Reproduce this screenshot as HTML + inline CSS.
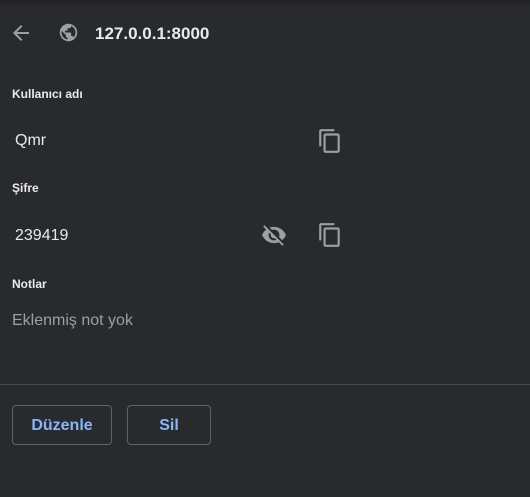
<!DOCTYPE html>
<html><head><meta charset="utf-8"><style>
body{margin:0;width:530px;height:497px;background:#292a2d;font-family:"Liberation Sans",sans-serif;position:relative;overflow:hidden;color:#e8eaed}
.top{position:absolute;left:0;top:0;width:530px;height:8px;background:linear-gradient(#1f2022,#292a2d)}
.a{position:absolute}
.lbl{font-size:12px;font-weight:bold;color:#e8eaed}
.val{font-size:16px;color:#e8eaed}
.btn{position:absolute;top:405px;height:38px;border:1px solid #5f6368;border-radius:4px;color:#8ab4f8;font-weight:bold;font-size:16px;text-align:center;line-height:40px;box-sizing:content-box}
svg{position:absolute}
</style></head><body>
<div class="top"></div>
<svg style="left:9px;top:21px" width="24" height="24" viewBox="0 0 24 24"><path fill="#9aa0a6" d="M20 11H7.83l5.59-5.59L12 4l-8 8 8 8 1.41-1.41L7.83 13H20v-2z"/></svg>
<svg style="left:58px;top:22px" width="21" height="21" viewBox="0 0 24 24"><path fill="#9aa0a6" d="M12 2C6.48 2 2 6.48 2 12s4.48 10 10 10 10-4.480 10-10S17.52 2 12 2zm-1 17.93c-3.950-.49-7-3.850-7-7.930 0-.62.08-1.21.21-1.79L9 15v1c0 1.1.9 2 2 2v1.930zm6.9-2.540c-.26-.81-1-1.390-1.9-1.390h-1v-3c0-.55-.45-1-1-1H8v-2h2c.55 0 1-.45 1-1V7h2c1.1 0 2-.9 2-2v-.41c2.930 1.190 5 4.060 5 7.410 0 2.080-.8 3.970-2.1 5.390z"/></svg>
<div class="a" style="left:95px;top:24px;font-size:17px;font-weight:bold;color:#e8eaed">127.0.0.1:8000</div>
<div class="a lbl" style="left:12px;top:87px">Kullanıcı adı</div>
<div class="a val" style="left:15px;top:132px">Qmr</div>
<svg style="left:317px;top:128px" width="26" height="26" viewBox="0 0 24 24"><path fill="#9aa0a6" d="M16 1H4c-1.1 0-2 .9-2 2v14h2V3h12V1zm3 4H8c-1.1 0-2 .9-2 2v14c0 1.1.9 2 2 2h11c1.1 0 2-.9 2-2V7c0-1.1-.9-2-2-2zm0 16H8V7h11v14z"/></svg>
<div class="a lbl" style="left:12px;top:181px">Şifre</div>
<div class="a val" style="left:15px;top:227px">239419</div>
<svg style="left:261px;top:222px" width="26" height="26" viewBox="0 0 24 24"><path fill="#9aa0a6" d="M12 7c2.76 0 5 2.24 5 5 0 .65-.13 1.26-.36 1.83l2.92 2.92c1.51-1.26 2.7-2.89 3.43-4.75-1.73-4.39-6-7.5-11-7.5-1.4 0-2.74.25-3.980.7l2.16 2.16C10.74 7.13 11.35 7 12 7zM2 4.27l2.28 2.28.46.46C3.08 8.3 1.78 10.02 1 12c1.73 4.39 6 7.5 11 7.5 1.55 0 3.03-.3 4.38-.84l.42.42L19.73 22 21 20.73 3.27 3 2 4.27zM7.53 9.8l1.55 1.55c-.05.21-.08.43-.08.65 0 1.66 1.34 3 3 3 .22 0 .44-.03.65-.08l1.55 1.55c-.67.33-1.410.53-2.2.53-2.76 0-5-2.24-5-5 0-.79.2-1.53.53-2.2z"/></svg>
<svg style="left:317px;top:222px" width="26" height="26" viewBox="0 0 24 24"><path fill="#9aa0a6" d="M16 1H4c-1.1 0-2 .9-2 2v14h2V3h12V1zm3 4H8c-1.1 0-2 .9-2 2v14c0 1.1.9 2 2 2h11c1.1 0 2-.9 2-2V7c0-1.1-.9-2-2-2zm0 16H8V7h11v14z"/></svg>
<div class="a lbl" style="left:12px;top:277px">Notlar</div>
<div class="a" style="left:12px;top:312px;font-size:16px;color:#9aa0a6">Eklenmiş not yok</div>
<div class="a" style="left:0;top:384px;width:530px;height:1px;background:#4a4c50"></div>
<div class="btn" style="left:12px;width:98px">Düzenle</div>
<div class="btn" style="left:127px;width:82px">Sil</div>
</body></html>
